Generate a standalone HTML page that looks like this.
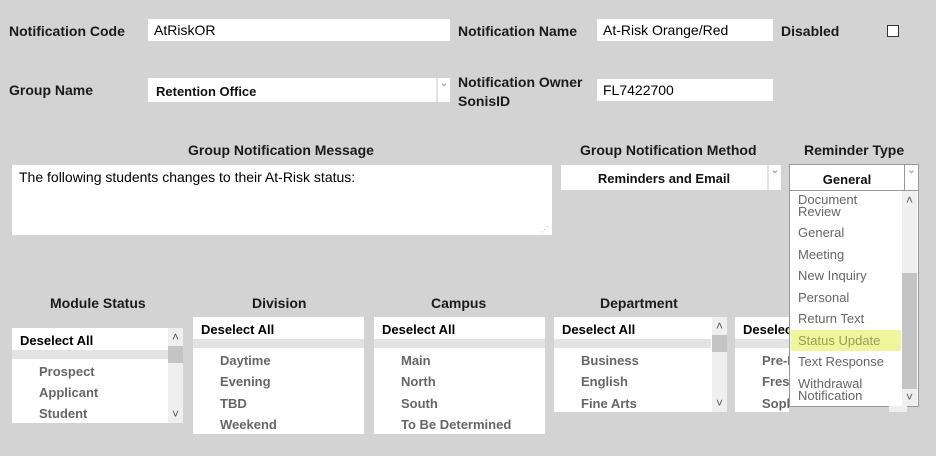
<!DOCTYPE html>
<html><head><meta charset="utf-8"><style>
*{margin:0;padding:0;box-sizing:border-box}
body{width:936px;height:456px;background:#d3d3d3;font-family:"Liberation Sans",sans-serif;position:relative;overflow:hidden;color:#111}
.a{position:absolute}
.lbl{position:absolute;font-weight:bold;font-size:14px;color:#1a1a1a;white-space:nowrap}
.inp{position:absolute;background:#fff;font-size:14px;padding:2px 6px;line-height:18px;color:#000}
.sel{position:absolute;background:#fff;font-weight:bold;font-size:13px;color:#111}
.arr{position:absolute;top:0;bottom:0;width:14px;border-left:2px solid #e3e3e3;color:#aaa;font-size:10px;text-align:center}
.box{position:absolute;background:#fff;overflow:hidden}
.box .h{position:absolute;left:8px;font-weight:bold;font-size:13px;color:#000;white-space:nowrap}
.box .g{position:absolute;left:0;height:9px;background:#e3e3e3}
.box .i{position:absolute;left:27px;font-weight:bold;font-size:13px;color:#666;white-space:nowrap}
.sb{position:absolute;top:0;bottom:0;width:15px;background:#efefef}
.sb .t{position:absolute;left:0;right:0;background:#c4c4c4}
.sb .u,.sb .d{position:absolute;left:0;right:0;text-align:center;font-size:12px;color:#555;line-height:10px}
.dd div{position:absolute;left:8px;font-size:13px;color:#666;line-height:12px;white-space:nowrap}
</style></head><body>
<div class="lbl" style="left:9px;top:23px">Notification Code</div>
<div class="inp" style="left:148px;top:19px;width:302px;height:22px">AtRiskOR</div>
<div class="lbl" style="left:458px;top:23px">Notification Name</div>
<div class="inp" style="left:597px;top:19px;width:176px;height:22px">At-Risk Orange/Red</div>
<div class="lbl" style="left:781px;top:23px">Disabled</div>
<div class="a" style="left:887px;top:25px;width:12px;height:12px;border:1px solid #333;background:#fff"></div>

<div class="lbl" style="left:9px;top:82px">Group Name</div>
<div class="sel" style="left:148px;top:78px;width:302px;height:24px;padding:6px 8px">Retention Office<div class="arr" style="right:0">&#8964;</div></div>
<div class="lbl" style="left:458px;top:73px;line-height:19px">Notification Owner<br>SonisID</div>
<div class="inp" style="left:597px;top:79px;width:176px;height:22px">FL7422700</div>

<div class="lbl" style="left:188px;top:142px">Group Notification Message</div>
<div class="a" style="left:12px;top:165px;width:540px;height:70px;background:#fff;font-size:14px;padding:4px 7px;color:#000">The following students changes to their At-Risk status:<span class="a" style="right:3px;bottom:1px;font-size:8px;color:#aaa">⋰</span></div>
<div class="lbl" style="left:580px;top:142px">Group Notification Method</div>
<div class="sel" style="left:561px;top:165px;width:220px;height:25px;padding:6px 0;text-align:center"><span style="margin-right:14px">Reminders and Email</span><div class="arr" style="right:0">&#8964;</div></div>
<div class="lbl" style="left:804px;top:142px">Reminder Type</div>
<div class="sel" style="left:789px;top:164px;width:130px;height:27px;border:1px solid #999;padding:7px 0;text-align:center;font-size:13px"><span style="margin-right:14px">General</span><div class="arr" style="right:0;border-left:1px solid #999">&#8964;</div></div>
<div class="box dd" style="left:789px;top:190px;width:130px;height:217px;border:1px solid #999">
<div style="top:3px">Document<br>Review</div>
<div style="top:36px">General</div>
<div style="top:58px">Meeting</div>
<div style="top:79px">New Inquiry</div>
<div style="top:101px">Personal</div>
<div style="top:122px">Return Text</div>
<div style="left:1px;top:139px;width:110px;height:21px;background:#eef59a"></div>
<div style="top:144px;color:#9a9a5a">Status Update</div>
<div style="top:165px">Text Response</div>
<div style="top:187px">Withdrawal<br>Notification</div>
<div class="sb" style="left:auto;right:1px;width:15px;background:#efefef"><div class="t" style="top:82px;height:116px"></div><div class="u" style="top:4px">&#708;</div><div class="d" style="bottom:4px">&#709;</div></div>
</div>

<div class="lbl" style="left:50px;top:295px">Module Status</div>
<div class="lbl" style="left:252px;top:295px">Division</div>
<div class="lbl" style="left:431px;top:295px">Campus</div>
<div class="lbl" style="left:600px;top:295px">Department</div>

<div class="box" style="left:12px;top:328px;width:171px;height:95px">
<div class="h" style="top:5px">Deselect All</div><div class="g" style="top:22px;width:156px"></div>
<div class="i" style="top:36px">Prospect</div><div class="i" style="top:57px">Applicant</div><div class="i" style="top:78px">Student</div>
<div class="sb" style="right:0"><div class="t" style="top:18px;height:17px"></div><div class="u" style="top:4px">&#708;</div><div class="d" style="bottom:4px">&#709;</div></div>
</div>
<div class="box" style="left:193px;top:317px;width:171px;height:117px">
<div class="h" style="top:5px">Deselect All</div><div class="g" style="top:22px;width:171px"></div>
<div class="i" style="top:36px">Daytime</div><div class="i" style="top:57px">Evening</div><div class="i" style="top:79px">TBD</div><div class="i" style="top:100px">Weekend</div>
</div>
<div class="box" style="left:374px;top:317px;width:171px;height:117px">
<div class="h" style="top:5px">Deselect All</div><div class="g" style="top:22px;width:171px"></div>
<div class="i" style="top:36px">Main</div><div class="i" style="top:57px">North</div><div class="i" style="top:79px">South</div><div class="i" style="top:100px">To Be Determined</div>
</div>
<div class="box" style="left:554px;top:317px;width:173px;height:95px">
<div class="h" style="top:5px">Deselect All</div><div class="g" style="top:22px;width:157px"></div>
<div class="i" style="top:36px">Business</div><div class="i" style="top:57px">English</div><div class="i" style="top:79px">Fine Arts</div>
<div class="sb" style="right:0"><div class="t" style="top:18px;height:17px"></div><div class="u" style="top:4px">&#708;</div><div class="d" style="bottom:4px">&#709;</div></div>
</div>
<div class="box" style="left:735px;top:317px;width:54px;height:95px">
<div class="h" style="top:5px">Deselect All</div><div class="g" style="top:22px;width:54px"></div>
<div class="i" style="top:36px">Pre-Law</div><div class="i" style="top:57px">Freshman</div><div class="i" style="top:79px">Sophomore</div>
</div>
<div class="a" style="left:889px;top:406px;width:18px;height:6px;background:#efefef"></div>
</body></html>
